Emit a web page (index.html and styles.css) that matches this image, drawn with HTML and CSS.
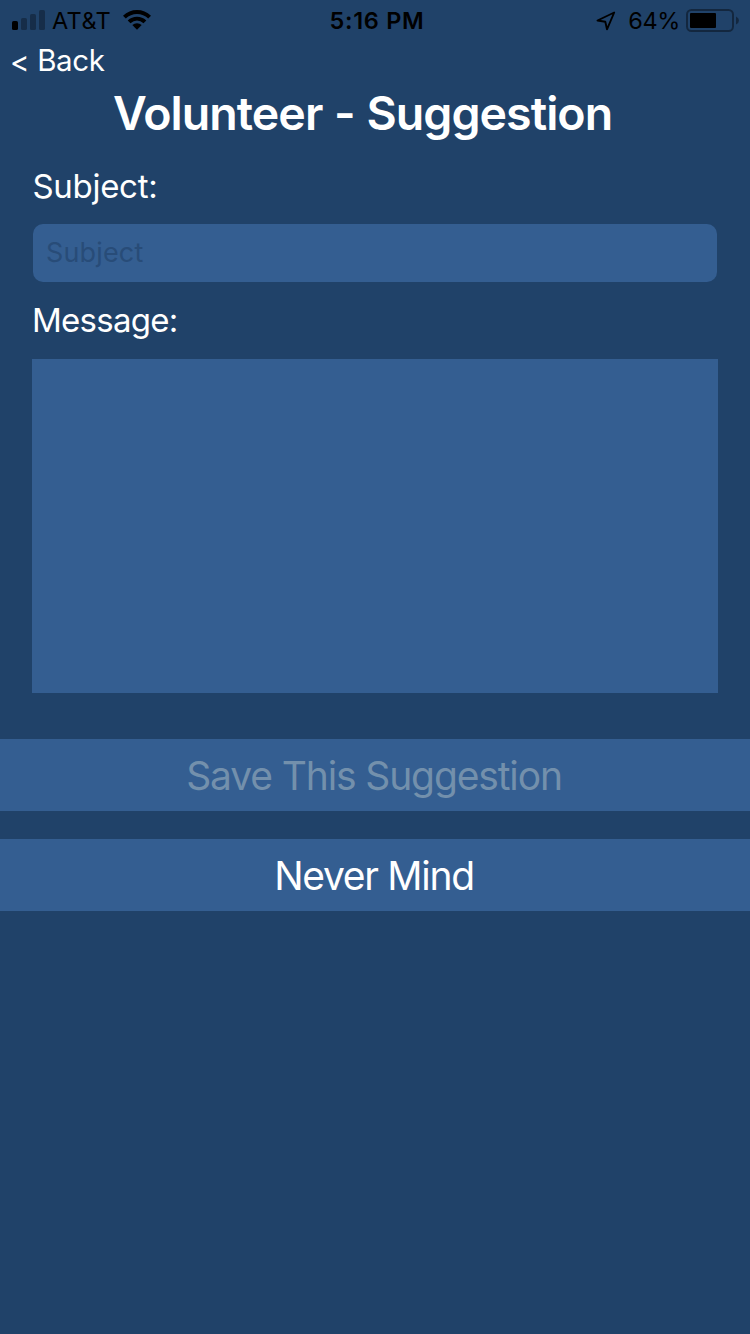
FILE: index.html
```html
<!DOCTYPE html>
<html lang="en">
<head>
<meta charset="utf-8">
<title>Volunteer - Suggestion</title>
<link rel="stylesheet" href="styles.css">
</head>
<body>
<div class="screen">
  <div class="status">
    <div class="status-left">
      <svg class="signal" width="34" height="20" viewBox="0 0 34 20">
        <rect x="0" y="11" width="6" height="9" rx="1.6"/>
        <g opacity=".3"><rect x="9" y="8" width="6" height="12" rx="1.6"/><rect x="18" y="4" width="6" height="16" rx="1.6"/><rect x="27" y="0" width="6" height="20" rx="1.6"/></g>
      </svg>
      <span class="carrier">AT&amp;T</span>
      <svg class="wifi" width="28" height="20" viewBox="0 0 28 20">
        <path d="M0 5.7Q6 0 14 0T28 5.7L25.2 8.5Q20.5 4 14 4T2.8 8.500Z"/>
        <path d="M4.7 10.400Q8.700 6.700 14 6.700T23.300 10.400L20.500 13.200Q17.500 10.600 14 10.600T7.500 13.200Z"/>
        <path d="M9.300 15.100Q11.300 13.300 14 13.300T18.700 15.100L14 19.800Z"/>
      </svg>
    </div>
    <span class="time">5:16 PM</span>
    <div class="status-right">
      <svg class="location" width="20" height="20" viewBox="0 0 20 20"><path d="M18.200 1.500L1.500 9.500L9.300 10.800L11 18.300Z" fill="none" stroke="#000" stroke-width="1.900" stroke-linejoin="round"/></svg>
      <span class="percent">64%</span>
      <svg class="battery" width="54" height="24" viewBox="0 0 54 24">
        <rect x="1" y="1" width="46" height="21" rx="4.500" fill="none" stroke="#000" stroke-opacity=".4" stroke-width="2"/>
        <rect x="4" y="4" width="26" height="15" rx="1"/>
        <path d="M50 7.500Q53 9 53 11.500T50 15.500Z" opacity=".4"/>
      </svg>
    </div>
  </div>
  <a class="back"><span class="chevron">&lt;</span><span>Back</span></a>
  <h1 class="title">Volunteer - Suggestion</h1>
  <form class="form">
    <label class="label subject-label" for="subject">Subject:</label>
    <input class="subject" id="subject" placeholder="Subject">
    <label class="label message-label" for="message">Message:</label>
    <textarea class="message" id="message"></textarea>
  </form>
  <div class="actions">
    <button class="action action-save" disabled><span>Save This Suggestion</span></button>
    <button class="action action-cancel"><span>Never Mind</span></button>
  </div>
</div>
</body>
</html>
```
FILE: styles.css
```css
* { box-sizing: border-box; }
body { margin: 0; background: #204269; color: #fff; font-family: Inter, "Liberation Sans", sans-serif; }
.screen { height: 1334px; display: flex; flex-direction: column; overflow: hidden; }
.status { height: 40px; flex: none; display: grid; grid-template-columns: 1fr auto 1fr; padding: 0 11px 0 12px; color: #000; font-size: 23.5px; line-height: 40px; white-space: nowrap; }
.status-left, .status-right { display: flex; align-items: flex-start; }
.status-left svg { margin-top: 10px; flex: none; }
.carrier { margin-left: 6px; padding-top: 1px; letter-spacing: .4px; }
.status .wifi { margin-left: 12px; }
.time { font-weight: 600; letter-spacing: .7px; padding: 1px 0 0 3px; }
.status-right { justify-content: flex-end; margin-right: -1px; }
.location { margin: 11px 12px 0 0; }
.percent { padding-top: 1px; letter-spacing: -.4px; }
.battery { margin: 9px 0 0 6px; }
.status-right .percent { margin-right: 0; }
.back { display: flex; gap: 8px; height: 41px; padding-left: 10px; font-size: 29.5px; line-height: 41px; letter-spacing: -.4px; }
.chevron { padding-top: 1px; }
.title { margin: 0; height: 66px; padding-left: 113px; font-size: 46.5px; line-height: 65px; font-weight: 600; letter-spacing: -.95px; word-spacing: .9px; white-space: nowrap; }
.form { display: flex; flex-direction: column; padding: 0 32px; }
.label { height: 40px; font-size: 33px; line-height: 40px; }
.subject-label { margin-top: 19px; letter-spacing: -.3px; padding-left: .5px; }
.message-label { line-height: 38px; letter-spacing: -.75px; }
.subject { height: 58px; margin: 18px 1px 19px; padding: 0 13px 2px; border: 0; border-radius: 10px; background: #345e91; color: #fff; font: 27px Inter, "Liberation Sans", sans-serif; letter-spacing: .15px; }
.subject::placeholder { color: #284c78; opacity: 1; }
.message { height: 334px; margin-top: 18px; border: 0; border-radius: 0; resize: none; background: #345e91; color: #fff; font: 27px Inter, "Liberation Sans", sans-serif; }
.actions { display: flex; flex-direction: column; gap: 28px; margin-top: 46px; }
.action { height: 72px; padding: 1px 2px 0 0; border: 0; background: #345e91; color: #fff; font: 39px/72px Inter, "Liberation Sans", sans-serif; letter-spacing: -1.3px; }
.action-save { color: #7390ac; letter-spacing: -1.13px; }
```
